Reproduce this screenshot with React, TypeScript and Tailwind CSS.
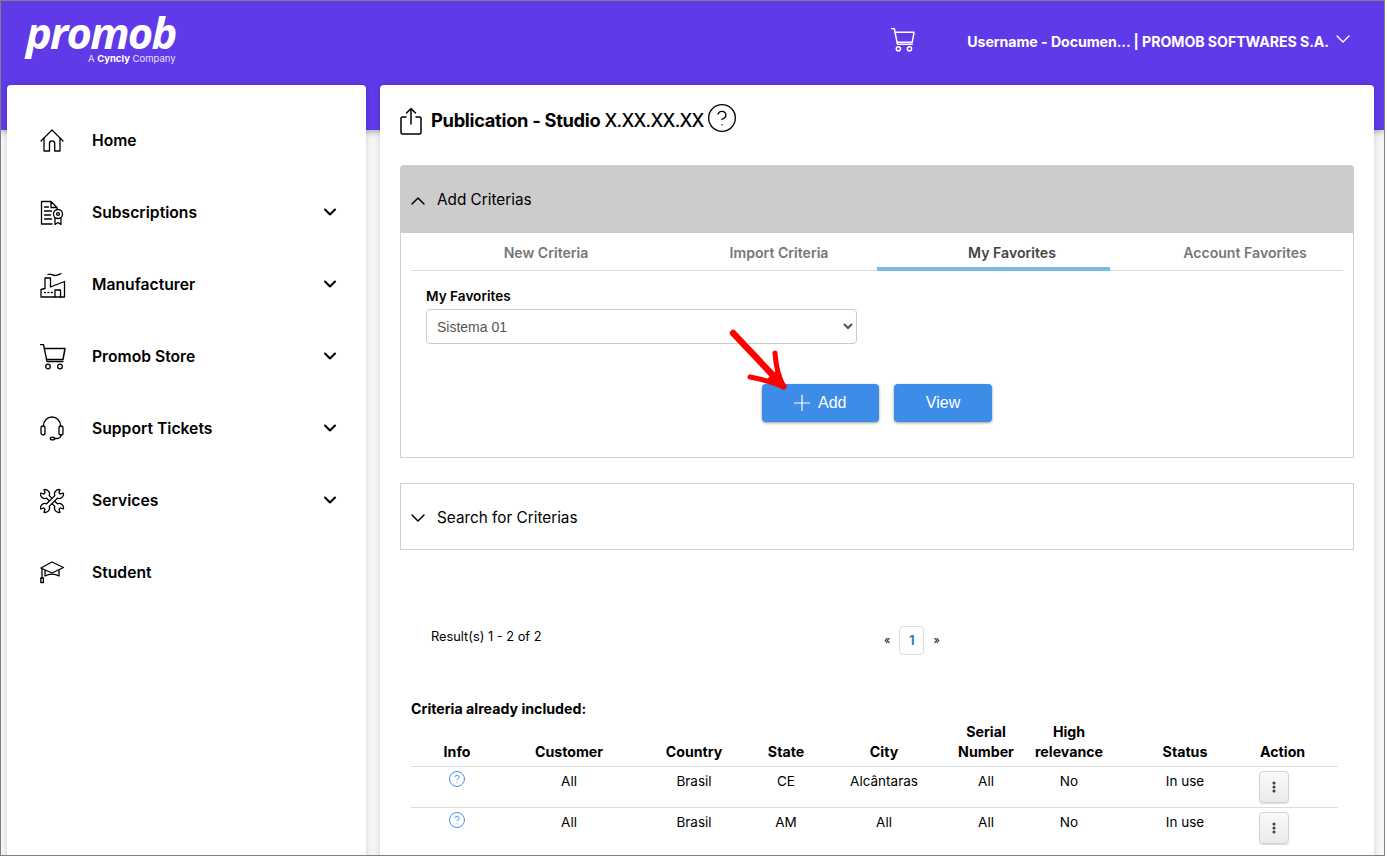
import { ChevronDown, ChevronUp, CircleHelp, EllipsisVertical, Plus } from "lucide-react";
import type { ReactNode } from "react";

const Icon = ({ children }: { children: ReactNode }) => (
  <svg
    viewBox="0 0 26 26"
    className="h-[26px] w-[26px] shrink-0"
    fill="none"
    stroke="#000"
    strokeWidth="1.3"
    strokeLinecap="round"
    strokeLinejoin="round"
  >
    {children}
  </svg>
);

const wrench =
  "M-6.4-2H6.4A5 5 0 0 1 15.2-2.7L12-1V1L15.2 2.7A5 5 0 0 1 6.4 2H-6.4A5 5 0 0 1-15.2 2.7L-12 1V-1L-15.2-2.7A5 5 0 0 1-6.4-2Z";

const menu = [
  {
    label: "Home",
    icon: (
      <>
        <path d="M1 13 12 2l11 11" />
        <path d="M4 10.5V23h5.5v-7.5a2.6 2.6 0 0 1 5.2 0V23H20V10.5" />
      </>
    ),
  },
  {
    label: "Subscriptions",
    more: true,
    icon: (
      <>
        <path d="M12 24H1.5V1.5H11l6 6V9M11 1.5v6h6" />
        <path d="M4.5 7h4M4.5 11h7M4.5 15h6M4.5 19h7" />
        <circle cx="18" cy="14" r="4.5" />
        <circle cx="18" cy="14" r="1.4" />
        <path d="M15 18v6.5l3-2 3 2V18" />
      </>
    ),
  },
  {
    label: "Manufacturer",
    more: true,
    icon: (
      <>
        <path d="M1 25v-7.5l4-1V6h5.5v9l14-5.5V25H1Z" />
        <path d="M8 2.5c3-1.5 4 1 7 1s4-1 6-2" />
        <path d="M4.5 20.5h1M8 20.5h1M11.5 20.5h1" />
        <path d="M15 25v-7h5.5v7" />
      </>
    ),
  },
  {
    label: "Promob Store",
    more: true,
    icon: (
      <>
        <path d="M.5.5h3L7 17.5h16" />
        <path d="M4.5 4.5H25l-2 11H6.5" strokeWidth="1.5" />
        <circle cx="8" cy="22.5" r="2.3" />
        <circle cx="20" cy="22.5" r="2.3" />
      </>
    ),
  },
  {
    label: "Support Tickets",
    more: true,
    icon: (
      <>
        <path d="M3.5 10v-.5a8.500 8.500 0 0 1 17 0v.5" />
        <rect x="1" y="10" width="4" height="9" rx="2" />
        <rect x="19" y="10" width="4" height="9" rx="2" />
        <path d="M21 19c0 2.5-2.5 3.5-5 3.5h-1.500" />
        <ellipse cx="12.5" cy="22.5" rx="2.2" ry="1.4" />
      </>
    ),
  },
  {
    label: "Services",
    more: true,
    icon: (
      <>
        <g transform="translate(12 13) rotate(45) scale(.9)" fill="#fff" strokeWidth="1.45">
          <path d={wrench} />
        </g>
        <g transform="translate(12 13) rotate(-45) scale(.9)" fill="#fff" strokeWidth="1.45">
          <path d={wrench} />
        </g>
      </>
    ),
  },
  {
    label: "Student",
    icon: (
      <>
        <path d="M.8 8 12 2l11.500 5.500L12 13Z" />
        <path d="M5 10.5V16c4-2.5 10-2.5 14 0v-6" />
        <path d="M2 9v9" />
        <rect x=".8" y="18" width="2.6" height="4.5" />
      </>
    ),
  },
];

const columns = ["Info", "Customer", "Country", "State", "City", "Serial Number", "High relevance", "Status"];

const rows = [
  ["All", "Brasil", "CE", "Alcântaras", "All", "No", "In use"],
  ["All", "Brasil", "AM", "All", "All", "No", "In use"],
];

const tabs = ["New Criteria", "Import Criteria", "My Favorites", "Account Favorites"];

const gridCols = "grid-cols-[92px_132px_118px_66px_130px_74px_92px_140px_83px]";

export default function App() {
  return (
    <div className="h-[856px] w-[1385px] overflow-hidden border border-[#7f7f7f] bg-[#f6f6f6] font-['Inter',sans-serif] text-black">
      <header className="flex h-[129px] items-start justify-between bg-[#6039e8] pr-[29px] pl-[25px] text-white shadow-[0_2px_6px_rgba(0,0,0,0.3)]">
        <div className="mt-[15px] flex flex-col items-end">
          <span className="font-['Open_Sans',sans-serif] text-[43.5px] leading-[34px] font-bold tracking-[-1.8px] italic">promob</span>
          <span className="mt-[4px] text-[9.5px] leading-[10px] text-[#e6e0fb]">
            A <b className="font-bold text-white">Cyncly</b> Company
          </span>
        </div>
        <div className="mt-[26px] flex items-center">
          <svg viewBox="0 0 26 26" className="h-[24px] w-[24px]" fill="none" stroke="#fff" strokeWidth="1.6" strokeLinecap="round" strokeLinejoin="round">
            <path d="M.5.5h3L7 17.5h16" />
            <path d="M4.5 4.5H25l-2 11H6.5" />
            <circle cx="8" cy="22.5" r="2.3" />
            <circle cx="20" cy="22.5" r="2.3" />
          </svg>
          <span className="mt-[4px] ml-[52px] text-[14.15px] font-bold tracking-[-0.05px]">Username - Documen... | PROMOB SOFTWARES S.A.</span>
          <ChevronDown size={24} strokeWidth={1.4} className="ml-[2px] -translate-y-[1px]" />
        </div>
      </header>

      <div className="-mt-[45px] flex items-start gap-[14px] pl-[6px]">
        <aside className="h-[790px] w-[359px] shrink-0 rounded-[4px] bg-white pt-[20px] pr-[26px] pl-[33px] shadow-[0_0_6px_rgba(0,0,0,0.15)]">
          {menu.map((item) => (
            <div key={item.label} className="flex h-[72px] items-center">
              <Icon>{item.icon}</Icon>
              <span className="ml-[26px] flex-1 text-[15.7px] font-semibold">{item.label}</span>
              {item.more && <ChevronDown size={20} strokeWidth={2.5} className="-translate-y-[1px]" />}
            </div>
          ))}
        </aside>

        <main className="h-[790px] w-[994px] shrink-0 rounded-[4px] bg-white px-[20px] shadow-[0_0_6px_rgba(0,0,0,0.15)]">
          <div className="flex h-[80px] items-center pb-[8px]">
            <svg viewBox="0 0 22 28" className="h-[28px] w-[22px]" fill="none" stroke="#000" strokeWidth="1.5" strokeLinecap="round" strokeLinejoin="round">
              <path d="M11 17V1.5M6.5 6 11 1.5 15.5 6" />
              <path d="M6 10H2.5A1.500 1.500 0 0 0 1 11.500v14A1.500 1.500 0 0 0 2.500 27h17a1.500 1.500 0 0 0 1.500-1.500v-14A1.500 1.500 0 0 0 19.500 10H16" />
            </svg>
            <h1 className="ml-[9px] text-[18.3px] font-bold tracking-[-0.3px]">
              Publication - Studio <span className="font-medium tracking-[-0.7px]">X.XX.XX.XX</span>
            </h1>
            <CircleHelp size={32} strokeWidth={1} className="ml-[2px] -translate-y-[3px]" />
          </div>

          <section className="rounded-t-[3px] border border-[#cfcfcf]">
            <div className="flex h-[67px] items-center gap-[7px] bg-[#cccccc] px-[5px] pt-[2px] text-[15.3px]">
              <ChevronUp size={24} strokeWidth={1.5} />
              Add Criterias
            </div>
            <div className="h-[224px] px-[10px]">
              <div className="flex h-[38px] border-b border-[#dcdcdc]">
                {tabs.map((tab) => (
                  <div
                    key={tab}
                    className={`flex-1 pt-[9px] pl-[37px] text-center text-[14.1px] font-semibold ${
                      tab === "My Favorites" ? "-mb-px border-b-4 border-[#7ab8e6] text-[#444]" : "text-[#777]"
                    }`}
                  >
                    {tab}
                  </div>
                ))}
              </div>
              <div className="px-[15px] pt-[16px]">
                <label className="block text-[13.6px] leading-[18px] font-semibold">My Favorites</label>
                <select className="mt-[4px] h-[35px] w-[431px] rounded-[4px] border border-[#ccc] bg-white px-[6px] font-['Liberation_Sans',sans-serif] text-[14px] text-[#555]">
                  <option>Sistema 01</option>
                </select>
              </div>
              <div className="relative mt-[40px] ml-[351px] flex gap-[15px] font-['Liberation_Sans',sans-serif] text-[16px] text-white">
                <button className="flex h-[38px] w-[117px] items-center gap-[3px] rounded-[4px] bg-[#3d8de8] pl-[27px] shadow-[0_1px_3px_rgba(0,0,0,0.4)]">
                  <Plus size={26} strokeWidth={1.1} />
                  Add
                </button>
                <button className="h-[38px] w-[98px] rounded-[4px] bg-[#3d8de8] shadow-[0_1px_3px_rgba(0,0,0,0.4)]">View</button>
                <svg viewBox="0 0 60 64" className="absolute -top-[55px] -left-[34px] h-[64px] w-[60px]" fill="none" stroke="#ff0000" strokeWidth="6.5" strokeLinecap="round" strokeLinejoin="round">
                  <path d="M5 4 55 57" />
                  <path d="M47 24c1 14 3 24 9 34-11-5-23-8-34-10" strokeWidth="5" />
                  <path d="M50 42l6 16-17-6Z" fill="#ff0000" strokeWidth="3" />
                </svg>
              </div>
            </div>
          </section>

          <section className="mt-[25px] flex h-[67px] items-center gap-[7px] border border-[#cfcfcf] px-[5px] pt-[3px] text-[15.3px]">
            <ChevronDown size={24} strokeWidth={1.5} />
            Search for Criterias
          </section>

          <div className="mt-[76px] flex items-start pl-[31px]">
            <span className="mt-[2px] w-[453px] text-[12.8px] leading-[18px]">Result(s) 1 - 2 of 2</span>
            <div className="flex items-center gap-[9px] text-[11px]">
              <span>«</span>
              <span className="flex h-[29px] w-[25px] items-center justify-center rounded-[4px] border border-[#ddd] pt-[1px] text-[13px] font-bold text-[#2f80c2]">1</span>
              <span>»</span>
            </div>
          </div>

          <p className="mt-[45px] pl-[11px] text-[14.2px] leading-[18px] font-bold">Criteria already included:</p>

          <div className="ml-[11px] w-[927px] text-[13.5px]">
            <div className={`mt-[4px] grid items-end border-b border-[#dcdcdc] pb-[4px] text-[14.2px] leading-[20px] font-bold ${gridCols}`}>
              {columns.map((column) => (
                <div key={column} className="px-[8px] text-center">
                  {column}
                </div>
              ))}
              <div className="pl-[5px]">Action</div>
            </div>
            {rows.map((row, index) => (
              <div key={index} className={`grid h-[41px] ${index === 0 ? "border-b border-[#dcdcdc]" : ""} ${gridCols}`}>
                <div className="flex justify-center pt-[3px]">
                  <CircleHelp size={18} strokeWidth={1.3} className="text-[#3d8de8]" />
                </div>
                {row.map((cell, i) => (
                  <div key={i} className="pt-[5px] text-center leading-[18px]">
                    {cell}
                  </div>
                ))}
                <div className="pt-[4px] pl-[4px]">
                  <button className="flex h-[32px] w-[30px] items-center justify-center rounded-[4px] border border-[#d4d4d4] bg-gradient-to-b from-[#fafafa] to-[#eaeaea] shadow-[0_1px_1px_rgba(0,0,0,0.15)]">
                    <EllipsisVertical size={14} strokeWidth={3.2} className="text-[#333]" />
                  </button>
                </div>
              </div>
            ))}
          </div>
        </main>
      </div>
    </div>
  );
}
